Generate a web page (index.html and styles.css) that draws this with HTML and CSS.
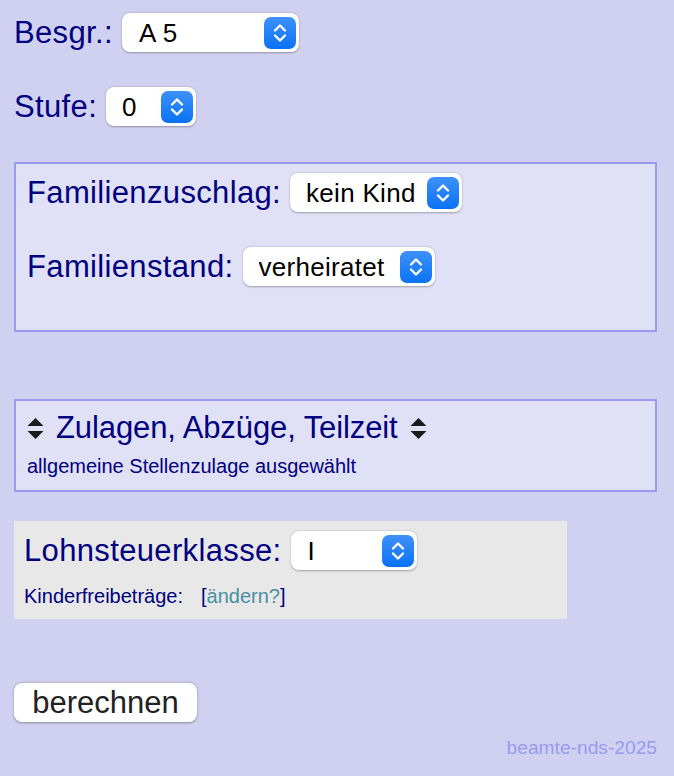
FILE: index.html
```html
<!DOCTYPE html>
<html lang="de">
<head>
<meta charset="utf-8">
<title>Beamte NDS 2025</title>
<link rel="stylesheet" href="styles.css">
</head>
<body>
<div class="page">
  <div class="row">
    <label class="lbl" for="besgr">Besgr.:</label>
    <span class="sel-wrap">
      <select id="besgr" class="sel sel-besgr"><option>A 5</option></select>
      <span class="arrow"><svg viewBox="0 0 32 32" width="32" height="32"><path d="M11 13.5 L16 8.5 L21 13.5 M11 18.5 L16 23.5 L21 18.5" /></svg></span>
    </span>
  </div>
  <div class="row row-gap">
    <label class="lbl" for="stufe">Stufe:</label>
    <span class="sel-wrap">
      <select id="stufe" class="sel sel-stufe"><option>0</option></select>
      <span class="arrow"><svg viewBox="0 0 32 32" width="32" height="32"><path d="M11 13.5 L16 8.5 L21 13.5 M11 18.5 L16 23.5 L21 18.5" /></svg></span>
    </span>
  </div>

  <div class="box box-family">
    <div class="row">
      <label class="lbl" for="fz">Familienzuschlag:</label>
      <span class="sel-wrap">
        <select id="fz" class="sel sel-fz"><option>kein Kind</option></select>
        <span class="arrow"><svg viewBox="0 0 32 32" width="32" height="32"><path d="M11 13.5 L16 8.5 L21 13.5 M11 18.5 L16 23.5 L21 18.5" /></svg></span>
      </span>
    </div>
    <div class="row row-gap">
      <label class="lbl" for="fs">Familienstand:</label>
      <span class="sel-wrap">
        <select id="fs" class="sel sel-fs"><option>verheiratet</option></select>
        <span class="arrow"><svg viewBox="0 0 32 32" width="32" height="32"><path d="M11 13.5 L16 8.5 L21 13.5 M11 18.5 L16 23.5 L21 18.5" /></svg></span>
      </span>
    </div>
  </div>

  <div class="box box-zulagen">
    <div class="zul-title">
      <svg class="sort" viewBox="0 0 17 21" width="17" height="21"><path d="M8.5 0 L16.5 8 L0.5 8 Z M0.5 13 L16.5 13 L8.5 21 Z"/></svg>
      <span>Zulagen, Abzüge, Teilzeit</span>
      <svg class="sort" viewBox="0 0 17 21" width="17" height="21"><path d="M8.5 0 L16.5 8 L0.5 8 Z M0.5 13 L16.5 13 L8.5 21 Z"/></svg>
    </div>
    <div class="small">allgemeine Stellenzulage ausgewählt</div>
  </div>

  <div class="grey">
    <div class="row">
      <label class="lbl" for="lsk">Lohnsteuerklasse:</label>
      <span class="sel-wrap">
        <select id="lsk" class="sel sel-lsk"><option>I</option></select>
        <span class="arrow"><svg viewBox="0 0 32 32" width="32" height="32"><path d="M11 13.5 L16 8.5 L21 13.5 M11 18.5 L16 23.5 L21 18.5" /></svg></span>
      </span>
    </div>
    <div class="small kfb">Kinderfreibeträge:<span class="bracket">[<a href="#" class="link">ändern?</a>]</span></div>
  </div>

  <button class="btn" type="button">berechnen</button>

  <div class="footer">beamte-nds-2025</div>
</div>
</body>
</html>
```

FILE: styles.css
```css
html, body {
  margin: 0;
  padding: 0;
  background: #d0d0f0;
}

body {
  font-family: "Liberation Sans", Arial, Helvetica, sans-serif;
  color: #000080;
}

.page {
  width: 643px;
  padding: 13px 0 0 14px;
  display: flex;
  flex-direction: column;
  align-items: flex-start;
}

.row {
  display: flex;
  align-items: center;
  gap: 9px;
  height: 39px;
}

.row-gap {
  margin-top: 35px;
}

.lbl {
  font-size: 31px;
  letter-spacing: 0.35px;
  line-height: 39px;
  white-space: nowrap;
}

.sel-wrap {
  position: relative;
  display: inline-block;
  height: 39px;
}

.sel {
  -webkit-appearance: none;
  appearance: none;
  display: block;
  height: 39px;
  margin: 0;
  border: none;
  border-radius: 8px;
  background: #ffffff;
  box-shadow: 0 0.5px 2px rgba(0, 0, 0, 0.3);
  color: #000;
  font-family: "Liberation Sans", Arial, sans-serif;
  font-size: 26px;
  letter-spacing: 0.3px;
  padding: 0 0 0 16px;
  outline: none;
}

.sel-besgr { width: 177px; padding-left: 17px; }
.sel-stufe { width: 90px; }
.sel-fz { width: 172px; }
.sel-fs { width: 192px; }
.sel-lsk { width: 126px; padding-left: 17px; }

.arrow {
  position: absolute;
  right: 3px;
  top: 4px;
  width: 32px;
  height: 32px;
  border-radius: 7px;
  background: linear-gradient(#3e91fb, #0a72f5);
  pointer-events: none;
}

.arrow svg {
  display: block;
}

.arrow path {
  fill: none;
  stroke: #ffffff;
  stroke-width: 2.4;
  stroke-linecap: round;
  stroke-linejoin: round;
}

.box {
  box-sizing: border-box;
  width: 643px;
  border: 2px solid #9a9af0;
  background: #e0e0f6;
}

.box-family {
  margin-top: 36px;
  padding: 9px 11px 44px;
}

.box-zulagen {
  margin-top: 67px;
  padding: 9px 11px 13px;
}

.zul-title {
  display: flex;
  align-items: center;
  gap: 12px;
  height: 36px;
  font-size: 31px;
  letter-spacing: -0.1px;
  white-space: nowrap;
}

.sort {
  display: block;
  fill: #1a1a1a;
}

.small {
  font-size: 20px;
  line-height: 22px;
  white-space: nowrap;
}

.box-zulagen .small {
  margin-top: 9px;
}

.grey {
  box-sizing: border-box;
  width: 553px;
  margin-top: 29px;
  padding: 10px 10px 12px;
  background: #e8e8e8;
}

.kfb {
  margin-top: 15px;
}

.bracket {
  margin-left: 18px;
}

.link {
  color: #4a8fa3;
  text-decoration: none;
}

.btn {
  margin-top: 64px;
  width: 183px;
  height: 39px;
  padding: 0;
  border: none;
  border-radius: 8px;
  background: #ffffff;
  box-shadow: 0 0.5px 2.5px rgba(0, 0, 0, 0.35);
  color: #222222;
  font-family: "Liberation Sans", Arial, sans-serif;
  font-size: 31px;
  line-height: 39px;
}

.footer {
  align-self: stretch;
  margin-top: 15px;
  text-align: right;
  font-size: 19.2px;
  line-height: 22px;
  color: #9a9af0;
}
```
